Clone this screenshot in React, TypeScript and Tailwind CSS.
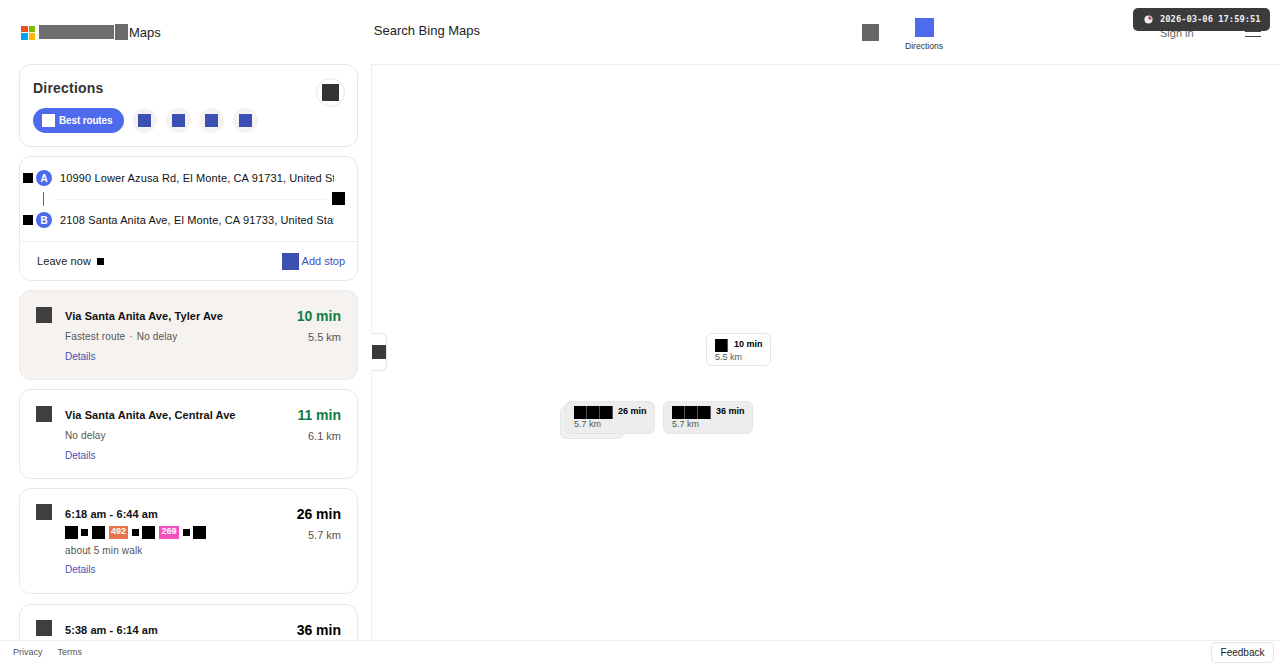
import { Fragment, type ReactNode } from 'react';

const Box = ({ className }: { className: string }) => <div className={`shrink-0 ${className}`} />;

const routeFilters = [0, 1, 2, 3];

function RouteCard({
  title,
  sub,
  time,
  dist,
  green,
  active,
  transit,
  className,
}: {
  title: string;
  sub: ReactNode;
  time: string;
  dist: string;
  green?: boolean;
  active?: boolean;
  transit?: boolean;
  className: string;
}) {
  return (
    <div
      className={`flex shrink-0 rounded-[12px] border border-[#e9e9e9] pl-[16px] pr-[16px] ${className} ${
        active ? 'bg-[#f5f2ef]' : 'bg-white'
      }`}
    >
      <Box className="h-[16px] w-[16px] bg-[#3f3f3f]" />
      <div className="ml-[13px] flex min-w-0 flex-1 flex-col">
        <div className={`${transit ? 'mt-[2px]' : 'mt-[1px]'} whitespace-nowrap text-[11px] font-bold leading-[16px] tracking-[0.07px] text-[#111]`}>{title}</div>
        {transit ? (
          <div className="mt-[2px] flex h-[16px] items-center">
            <Box className="h-[13px] w-[13px] bg-black" />
            <Box className="ml-[3px] h-[7px] w-[7px] bg-black" />
            <Box className="ml-[4px] h-[13px] w-[13px] bg-black" />
            <div className="ml-[4px] flex h-[13px] w-[19px] shrink-0 items-center justify-center bg-[#e8734a] text-[9px] font-bold text-white">492</div>
            <Box className="ml-[4px] h-[7px] w-[7px] bg-black" />
            <Box className="ml-[3px] h-[13px] w-[13px] bg-black" />
            <div className="ml-[4px] flex h-[13px] w-[20px] shrink-0 items-center justify-center bg-[#f54fc0] text-[9px] font-bold text-white">269</div>
            <Box className="ml-[4px] h-[7px] w-[7px] bg-black" />
            <Box className="ml-[3px] h-[13px] w-[13px] bg-black" />
          </div>
        ) : null}
        <div className={`${transit ? 'mt-[3px]' : 'mt-[5px]'} whitespace-nowrap text-[10px] leading-[16px] tracking-[0.15px] text-[#555]`}>{sub}</div>
        <div className={`${transit ? 'mt-[3px]' : 'mt-[4px]'} text-[10px] leading-[16px] text-[#3f51b5]`}>Details</div>
      </div>
      <div className={`${transit ? 'mt-[1px]' : 'mt-0'} flex flex-col items-end`}>
        <div className={`whitespace-nowrap text-[14px] font-bold leading-[18px] ${green ? 'text-[#107c41]' : 'text-black'}`}>{time}</div>
        <div className="mt-[4px] whitespace-nowrap text-[11px] leading-[16px] text-[#555]">{dist}</div>
      </div>
    </div>
  );
}

function MapLabel({ blocks, time, dist, className }: { blocks: number; time: string; dist: string; className: string }) {
  return (
    <div className={`absolute h-[33px] rounded-[6px] border border-[#e6e6e6] pl-[8px] ${className}`}>
      <div className="flex h-[14px] items-center">
        {Array.from({ length: blocks }).map((_, i) => (
          <Fragment key={i}>
            <Box className="h-[13px] w-[13px] border-r border-[#555] bg-black last:border-r-0" />
          </Fragment>
        ))}
        <span className={`${blocks > 1 ? 'ml-[5px]' : 'ml-[6px]'} whitespace-nowrap text-[9px] font-bold text-black`}>{time}</span>
      </div>
      <div className="text-[9px] leading-[11px] text-[#555]">{dist}</div>
    </div>
  );
}

export default function App() {
  return (
    <div className="relative flex h-[665px] w-[1280px] flex-col overflow-hidden bg-white font-['Liberation_Sans',Arial,sans-serif]">
      {/* Top bar */}
      <header className="relative flex h-[64px] shrink-0 items-center">
        <div className="ml-[21px] mt-[1px] grid h-[14px] w-[14px] grid-cols-2 gap-[1px]">
          <div className="bg-[#f25022]" />
          <div className="bg-[#7fba00]" />
          <div className="bg-[#00a4ef]" />
          <div className="bg-[#ffb900]" />
        </div>
        <Box className="ml-[4px] h-[14px] w-[75px] bg-[#6d6e70]" />
        <Box className="ml-[1px] h-[16px] w-[13px] bg-[#6a6a6a]" />
        <span className="ml-[1px] mt-[1px] text-[13px] text-[#222]">Maps</span>
        <span className="ml-[213px] mt-[-3px] text-[13px] text-[#222]">Search Bing Maps</span>
        <Box className="ml-[382px] h-[17px] w-[17px] bg-[#666]" />
        <div className="ml-[24px] mt-[5px] flex w-[42px] flex-col items-center">
          <Box className="h-[19px] w-[19px] bg-[#4f6bed]" />
          <span className="mt-[4px] whitespace-nowrap text-[8.6px] leading-[11px] text-[#333]">Directions</span>
        </div>
        <span className="ml-[215px] mt-[2px] whitespace-nowrap text-[11px] text-[#666]">Sign in</span>
        <div className="ml-[51px] mt-[-1px] flex w-[16px] flex-col gap-[4px]">
          <div className="h-[1px] bg-[#444]" />
          <div className="h-[1px] bg-[#444]" />
          <div className="h-[1px] bg-[#444]" />
        </div>
      </header>

      <div className="flex min-h-0 flex-1">
        {/* Side panel */}
        <aside className="flex w-[372px] shrink-0 flex-col overflow-hidden border-r border-[#efefef] pl-[19px] pr-[13px]">
          <div className="relative mb-[9px] h-[83px] shrink-0 rounded-[12px] border border-[#e6e6e6] pl-[13px] pt-[14px]">
            <div className="text-[14px] font-bold leading-[18px] tracking-[0.2px] text-[#333]">Directions</div>
            <div className="mt-[11px] flex items-center gap-[8.6px]">
              <div className="flex h-[25px] w-[90.5px] items-center rounded-full bg-[#4f6bed] pl-[9px]">
                <Box className="h-[13px] w-[13px] bg-white" />
                <span className="ml-[4px] whitespace-nowrap text-[10px] font-bold tracking-[-0.15px] text-white">Best routes</span>
              </div>
              {routeFilters.map((f) => (
                <div key={f} className="flex h-[25px] w-[25px] items-center justify-center rounded-full bg-[#f5f2ef]">
                  <Box className="h-[13px] w-[13px] bg-[#3c50b4]" />
                </div>
              ))}
            </div>
            <div className="absolute right-[12px] top-[13px] flex h-[29px] w-[29px] items-center justify-center rounded-full border border-[#e6e6e6]">
              <Box className="h-[17px] w-[17px] bg-[#333]" />
            </div>
          </div>

          <div className="mb-[9px] h-[125px] shrink-0 rounded-[12px] border border-[#e9e9e9]">
            <div className="relative h-[85px] border-b border-[#eee]">
              <div className="absolute left-[3px] top-[13px] flex items-center">
                <Box className="h-[10px] w-[10px] bg-black" />
                <div className="ml-[3px] flex h-[16px] w-[16px] items-center justify-center rounded-full bg-[#4f6bed] text-[10px] font-bold text-white">A</div>
              </div>
              <div className="absolute left-[40px] top-[13px] w-[274px] overflow-hidden whitespace-nowrap text-[11px] leading-[16px] tracking-[0.13px] text-[#111]">
                10990 Lower Azusa Rd, El Monte, CA 91731, United States
              </div>
              <div className="absolute left-[23px] top-[35px] h-[14px] w-[1px] bg-[#666]" />
              <div className="absolute left-[34px] top-[42px] h-[1px] w-[272px] bg-[#f3f3f3]" />
              <Box className="absolute right-[12px] top-[35px] h-[13px] w-[13px] bg-black" />
              <div className="absolute left-[3px] top-[55px] flex items-center">
                <Box className="h-[10px] w-[10px] bg-black" />
                <div className="ml-[3px] flex h-[16px] w-[16px] items-center justify-center rounded-full bg-[#4f6bed] text-[10px] font-bold text-white">B</div>
              </div>
              <div className="absolute left-[40px] top-[55px] w-[274px] overflow-hidden whitespace-nowrap text-[11px] leading-[16px] tracking-[0.13px] text-[#111]">
                2108 Santa Anita Ave, El Monte, CA 91733, United States
              </div>
            </div>
            <div className="flex h-[38px] items-center pl-[17px] pr-[12px]">
              <span className="text-[11px] tracking-[0.08px] text-[#222]">Leave now</span>
              <Box className="ml-[6px] h-[7px] w-[7px] bg-black" />
              <Box className="ml-auto h-[17px] w-[17px] bg-[#3c50b4]" />
              <span className="ml-[3px] text-[11px] text-[#3f51b5]">Add stop</span>
            </div>
          </div>

          <RouteCard
            active
            green
            title="Via Santa Anita Ave, Tyler Ave"
            sub={
              <>
                Fastest route<span className="mx-[4px]">·</span>No delay
              </>
            }
            time="10 min"
            dist="5.5 km"
            className="mb-[9px] h-[90px] pt-[16px]"
          />
          <RouteCard green title="Via Santa Anita Ave, Central Ave" sub="No delay" time="11 min" dist="6.1 km" className="mb-[9px] h-[90px] pt-[16px]" />
          <RouteCard transit title="6:18 am - 6:44 am" sub="about 5 min walk" time="26 min" dist="5.7 km" className="mb-[10px] h-[106px] pt-[15px]" />
          <RouteCard transit title="5:38 am - 6:14 am" sub="about 5 min walk" time="36 min" dist="5.7 km" className="mb-[10px] h-[106px] pt-[15px]" />
        </aside>

        {/* Map canvas */}
        <main className="relative min-w-0 flex-1 border-t border-[#eee]">
          <div className="absolute left-[-1px] top-[268px] flex h-[38px] w-[16px] items-center rounded-r-[6px] border border-l-0 border-[#e6e6e6] bg-white">
            <Box className="ml-[1px] h-[14px] w-[14px] bg-[#3a3a3a]" />
          </div>
          <MapLabel blocks={1} time="10 min" dist="5.5 km" className="left-[334px] top-[268px] w-[65px] bg-white pt-[4px]" />
          <div className="absolute left-[188px] top-[341px] h-[33px] w-[64px] rounded-[6px] border border-[#e6e6e6] bg-[#f0f0f0]" />
          <MapLabel blocks={3} time="26 min" dist="5.7 km" className="left-[193px] top-[336px] w-[90px] bg-[#ededed] pt-[3px]" />
          <MapLabel blocks={3} time="36 min" dist="5.7 km" className="left-[291px] top-[336px] w-[90px] bg-[#ededed] pt-[3px]" />
        </main>
      </div>

      {/* Footer */}
      <footer className="relative flex h-[25px] shrink-0 items-center border-t border-[#efefef] bg-white pl-[13px] pr-[6px]">
        <span className="text-[9px] text-[#555]">Privacy</span>
        <span className="ml-[15px] text-[9px] text-[#555]">Terms</span>
        <div className="mb-[1px] ml-auto flex h-[21px] w-[63px] items-center justify-center rounded-[4px] border border-[#e6e6e6] bg-white text-[10px] text-[#222]">
          Feedback
        </div>
      </footer>

      {/* Timestamp stamp */}
      <div className="absolute left-[1133px] top-[8px] flex h-[23px] w-[137px] items-center rounded-[5px] bg-[#303030]/95 pl-[11px] font-['DejaVu_Sans_Mono',monospace] text-[8.8px] font-bold text-[#eee]">
        <svg width="9" height="9" viewBox="0 0 10 10" className="shrink-0">
          <circle cx="5" cy="5" r="4.5" fill="#eee" />
          <path d="M5 5V1.5A3.5 3.5 0 0 1 8.5 5Z" fill="#b5476a" />
        </svg>
        <span className="ml-[7px] whitespace-nowrap">2026-03-06 17:59:51</span>
      </div>
    </div>
  );
}
